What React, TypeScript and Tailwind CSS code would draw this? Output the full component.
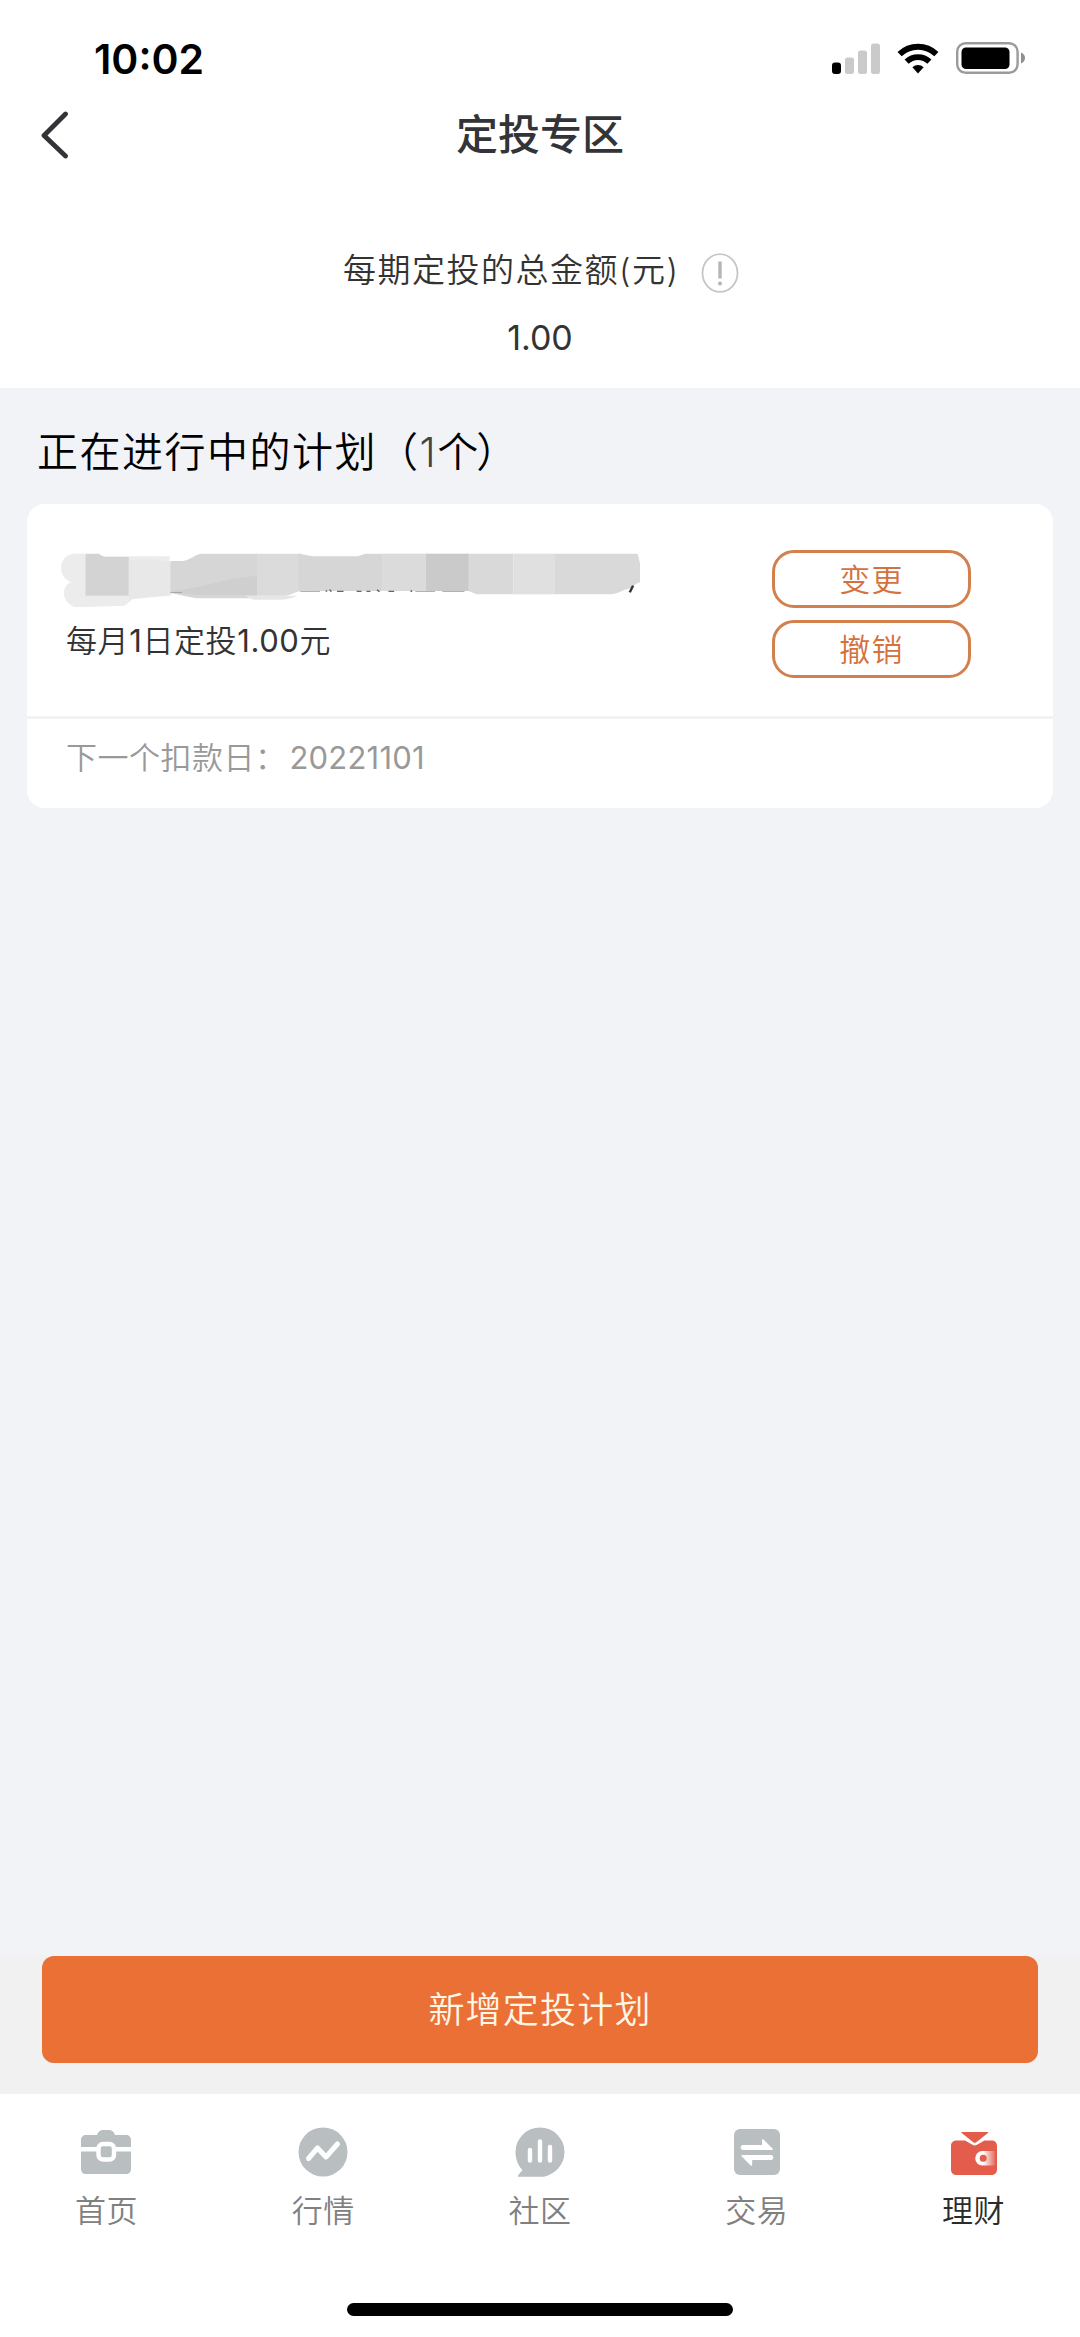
import React from 'react';

const SignalIcon = () => (
  <svg width="48" height="31" viewBox="0 0 48 31">
    <rect x="0" y="19.5" width="9" height="11.5" rx="3" fill="#000" />
    <rect x="13" y="14.5" width="9" height="16.5" rx="2.5" fill="#cacaca" />
    <rect x="26" y="7.5" width="9" height="23.5" rx="2.5" fill="#cacaca" />
    <rect x="39" y="0.5" width="9" height="30.5" rx="2.5" fill="#cacaca" />
  </svg>
);

const WifiIcon = () => (
  <svg width="42" height="31" viewBox="0 0 42 31" fill="none" stroke="#000">
    <path d="M2.6 11.2a26.6 26.6 0 0 1 36.8 0" strokeWidth="6" />
    <path d="M9.6 18.7a16.4 16.4 0 0 1 22.8 0" strokeWidth="5.8" />
    <path d="M21 30.5l-5.6-6.3a8.4 8.4 0 0 1 11.2 0z" fill="#000" stroke="none" />
  </svg>
);

const BatteryIcon = () => (
  <svg width="69" height="32" viewBox="0 0 69 32">
    <rect x="1.2" y="1.2" width="60.4" height="29.6" rx="8.5" fill="none" stroke="#9b9b9b" strokeWidth="2.4" />
    <rect x="5.5" y="5.5" width="48" height="21.5" rx="4.5" fill="#000" />
    <path d="M65 10.5c2.6 1 4 3 4 5.5s-1.4 4.5-4 5.5z" fill="#8f8f8f" />
  </svg>
);

// Mosaic strip that hides the fund name
const MaskedName = () => (
  <svg className="block h-[54px] w-[579px]" viewBox="0 0 1418 162" preserveAspectRatio="none">
    <path d="M60 2H28C10 8 0 24 0 44c0 18 8 34 24 44-14 8-18 20-16 42 4 16 14 26 24 32h34l90-4 20-20 90-10V10H60z" fill="#ececec" />
    <path d="M60 2h32l14 10h60v116H60z" fill="#d3d3d3" />
    <path d="M166 20h70l20 6h14v100l-104 12z" fill="#e8e8e8" />
    <path d="M268 24h30c20-4 28-18 44-22h138v134H330l-30-8-32-8z" fill="#d6d6d6" />
    <path d="M268 114c50-4 90-20 150-36l62-10v58H330l-30-4-32-6z" fill="#cfcfcf" />
    <path d="M450 128h130c-14 6-22 10-40 12h-70z" fill="#e6e6e6" />
    <path d="M480 2h110v112c-18 2-24 12-40 14h-70z" fill="#dbdbdb" />
    <path d="M582 2l34 8h110l20-8h42v112H582z" fill="#d6d6d6" />
    <rect x="788" y="2" width="107" height="112" fill="#dbdbdb" />
    <rect x="894" y="2" width="105" height="112" fill="#cacaca" />
    <path d="M998 2h110v122h-90l-20-10z" fill="#d9d9d9" />
    <rect x="1108" y="2" width="104" height="122" fill="#e0e0e0" />
    <path d="M1210 2h202l6 28v58c-12 4-14 12-24 18-20 4-28 18-50 18h-134z" fill="#d9d9d9" />
    <path d="M268 118h28M586 115h48M868 115h48M934 115h54" stroke="#999" strokeWidth="2.5" />
    <path d="M650 112v4M658 110l4 6M676 115h16M724 115h12M748 115h10M774 110l6 6M802 115h14M858 112v5" stroke="#666" strokeWidth="4" />
    <path d="M1401 98l-8 20" stroke="#333" strokeWidth="6" />
  </svg>
);

const HomeIcon = () => (
  <svg width="52" height="50" viewBox="0 0 52 50">
    <path d="M6 8h11c1-3.5 3.5-5 6-5h6c2.5 0 5 1.5 6 5h11c3 0 5 2 5 5v29c0 3-2 5-5 5H6c-3 0-5-2-5-5V13c0-3 2-5 5-5z" fill="#b9bfc1" />
    <path d="M0 22.3h52" stroke="#fff" strokeWidth="4.6" />
    <rect x="18.5" y="17" width="15.5" height="15.5" rx="4.5" fill="#b9bfc1" stroke="#fff" strokeWidth="4.4" />
  </svg>
);

const MarketIcon = () => (
  <svg width="50" height="50" viewBox="0 0 50 50">
    <circle cx="25" cy="25" r="24.5" fill="#b9bfc1" />
    <path d="M10.5 31.5l9-10.5 8.5 9 11.5-13" fill="none" stroke="#fff" strokeWidth="5" strokeLinecap="round" strokeLinejoin="round" />
  </svg>
);

const CommunityIcon = () => (
  <svg width="50" height="50" viewBox="0 0 50 50">
    <path d="M25 .5a24.5 24.5 0 0 1 24.5 24.5C49.5 38 40 47 29 49.7H3.5c-.9 0-.9-.8-.4-1.4L7.5 43C3 38.5.5 32 .5 25A24.5 24.5 0 0 1 25 .5z" fill="#b9bfc1" />
    <path d="M15 23v10.5M25 14.5v19M35 20v13.5" stroke="#fff" strokeWidth="4.4" strokeLinecap="round" />
  </svg>
);

const TradeIcon = () => (
  <svg width="50" height="50" viewBox="0 0 50 50">
    <rect x="2" y="2" width="46" height="46" rx="6" fill="#b9bfc1" />
    <path d="M11 18h19v-4.5c0-1.4 1-1.6 2-.6l8.5 8.5c.8.8.4 1.6-.8 1.6H11c-3 0-3-5 0-5z" fill="#fff" />
    <path d="M39 28H10.5c-1.2 0-1.6.8-.8 1.6l8.5 8.5c1 1 2 .8 2-.6V33H39c3 0 3-5 0-5z" fill="#fff" />
  </svg>
);

const WealthIcon = () => (
  <svg width="50" height="50" viewBox="0 0 50 50">
    <defs>
      <linearGradient id="clasp" x1="0" x2="1">
        <stop offset="0.4" stopColor="#fff" />
        <stop offset="1" stopColor="#fff" stopOpacity="0.1" />
      </linearGradient>
    </defs>
    <path d="M13 5h25.5c.9 0 1 .6.4 1.1L27 15.4c-.8.6-1.6.6-2.4 0L12.7 6.1C12 5.6 12.2 5 13 5z" fill="#e45c4b" />
    <path d="M7.5 13.5h8.5l7.5 4.3c1.5.8 3 .8 4.5 0l7.5-4.3h7c3.3 0 5.5 2 5.5 5.5v23.5c0 3.3-2.2 5.5-5.5 5.5h-35C4.2 48 2 45.8 2 42.5V19c0-3.3 2.2-5.5 5.5-5.5z" fill="#e45c4b" />
    <path d="M33.5 24H46v14.5H33.5a7.25 7.25 0 0 1 0-14.5z" fill="url(#clasp)" />
    <circle cx="34.2" cy="31.2" r="3.5" fill="#e45c4b" />
  </svg>
);

const tabs = [
  { label: '首页', icon: HomeIcon },
  { label: '行情', icon: MarketIcon },
  { label: '社区', icon: CommunityIcon },
  { label: '交易', icon: TradeIcon },
  { label: '理财', icon: WealthIcon, active: true },
];

export default function App() {
  return (
    <div className="flex h-[2337px] w-[1080px] flex-col overflow-hidden bg-[#f1f3f7] font-['Inter','Noto_Sans_CJK_SC',sans-serif] font-[350] text-[#333]">
      <header className="h-[388px] shrink-0 bg-white">
        {/* Status bar */}
        <div className="flex h-[87px] items-start justify-between pt-[42px] pr-[55px] pl-[94px]">
          <span className="text-[41px] leading-[34px] font-semibold text-black">10:02</span>
          <div className="flex items-center">
            <SignalIcon />
            <span className="ml-[17px]"><WifiIcon /></span>
            <span className="ml-[17px]"><BatteryIcon /></span>
          </div>
        </div>

        {/* Title */}
        <div className="grid h-24 grid-cols-[1fr_auto_1fr] items-center pl-[41px]">
          <button aria-label="返回">
            <svg width="28" height="48" viewBox="0 0 28 48" fill="none" stroke="#333437" strokeWidth="4.8" strokeLinecap="round" strokeLinejoin="round">
              <path d="M24.5 3L3 24.5 24.5 45" />
            </svg>
          </button>
          <h1 className="mr-[41px] text-[42px] leading-none font-medium text-[#333437]">定投专区</h1>
        </div>

        {/* Total amount */}
        <div className="mt-[67px] flex h-10 items-center pl-[343px]">
          <span className="text-[33px] leading-10 tracking-[1.5px] whitespace-nowrap">每期定投的总金额(元)</span>
          <svg className="mt-[5px] ml-[22px]" width="38" height="40" viewBox="0 0 38 40" fill="none">
            <ellipse cx="19" cy="20" rx="17.5" ry="18.8" stroke="#c6c6c6" strokeWidth="1.8" />
            <path d="M19 8.5v17" stroke="#b5b5b5" strokeWidth="3.4" />
            <circle cx="19" cy="30.5" r="2" fill="#b5b5b5" />
          </svg>
        </div>
        <div className="mt-[28px] text-center text-[34px] leading-10 font-normal">1.00</div>
      </header>

      <main className="flex-1 px-[27px]">
        <h2 className="mt-[40px] pl-[10px] text-[41px] leading-[48px] tracking-[1.5px] whitespace-nowrap text-black">
          正在进行中的计划（<span className="text-[#444]">1</span><span className="tracking-[-2px]">个</span>）
        </h2>

        <section className="mt-[28px] h-[304px] overflow-hidden rounded-[18px] bg-white">
          <div className="flex h-[215px] justify-between border-b-[3px] border-[#f1f2f4] pr-[82px]">
            <div className="pt-[49px] pl-[34px]">
              <MaskedName />
              <p className="mt-[14px] pl-[5px] text-[31px] leading-10 tracking-[0.6px]">
                每月<span className="font-normal">1</span>日定投<span className="font-normal">1.00</span>元
              </p>
            </div>
            <div className="flex flex-col gap-3 pt-[46px]">
              <button className="h-[58px] w-[199px] rounded-[22px] border-3 border-[#d3804f] text-[31px] leading-none tracking-[1.2px] text-[#d5713d]">变更</button>
              <button className="h-[58px] w-[199px] rounded-[22px] border-3 border-[#d3804f] text-[31px] leading-none tracking-[1.2px] text-[#d5713d]">撤销</button>
            </div>
          </div>
          <p className="mt-[19px] pl-[39px] text-[31px] leading-10 tracking-[0.5px] text-[#999]">
            下一个扣款日：<span className="ml-[3px] font-normal tracking-[0.2px]">20221101</span>
          </p>
        </section>
      </main>

      <div className="h-[138px] shrink-0 bg-[#f1f1f2] px-[42px]">
        <button className="flex h-[107px] w-full items-center justify-center rounded-xl bg-[#ea7035] text-[36px] tracking-[1.2px] text-[#fff6e6]">
          新增定投计划
        </button>
      </div>

      <nav className="h-[243px] shrink-0 bg-white">
        <div className="-mx-[2px] grid grid-cols-5 pt-[33px]">
          {tabs.map(({ label, icon: Icon, active }) => (
            <button key={label} className="flex flex-col items-center">
              <Icon />
              <span className={`mt-[14px] text-[31px] leading-10 tracking-[0.5px] ${active ? 'text-[#2b2b2b]' : 'text-[#808080]'}`}>{label}</span>
            </button>
          ))}
        </div>
        <div className="mx-auto mt-[72px] h-[13px] w-[386px] rounded-full bg-black" />
      </nav>
    </div>
  );
}
